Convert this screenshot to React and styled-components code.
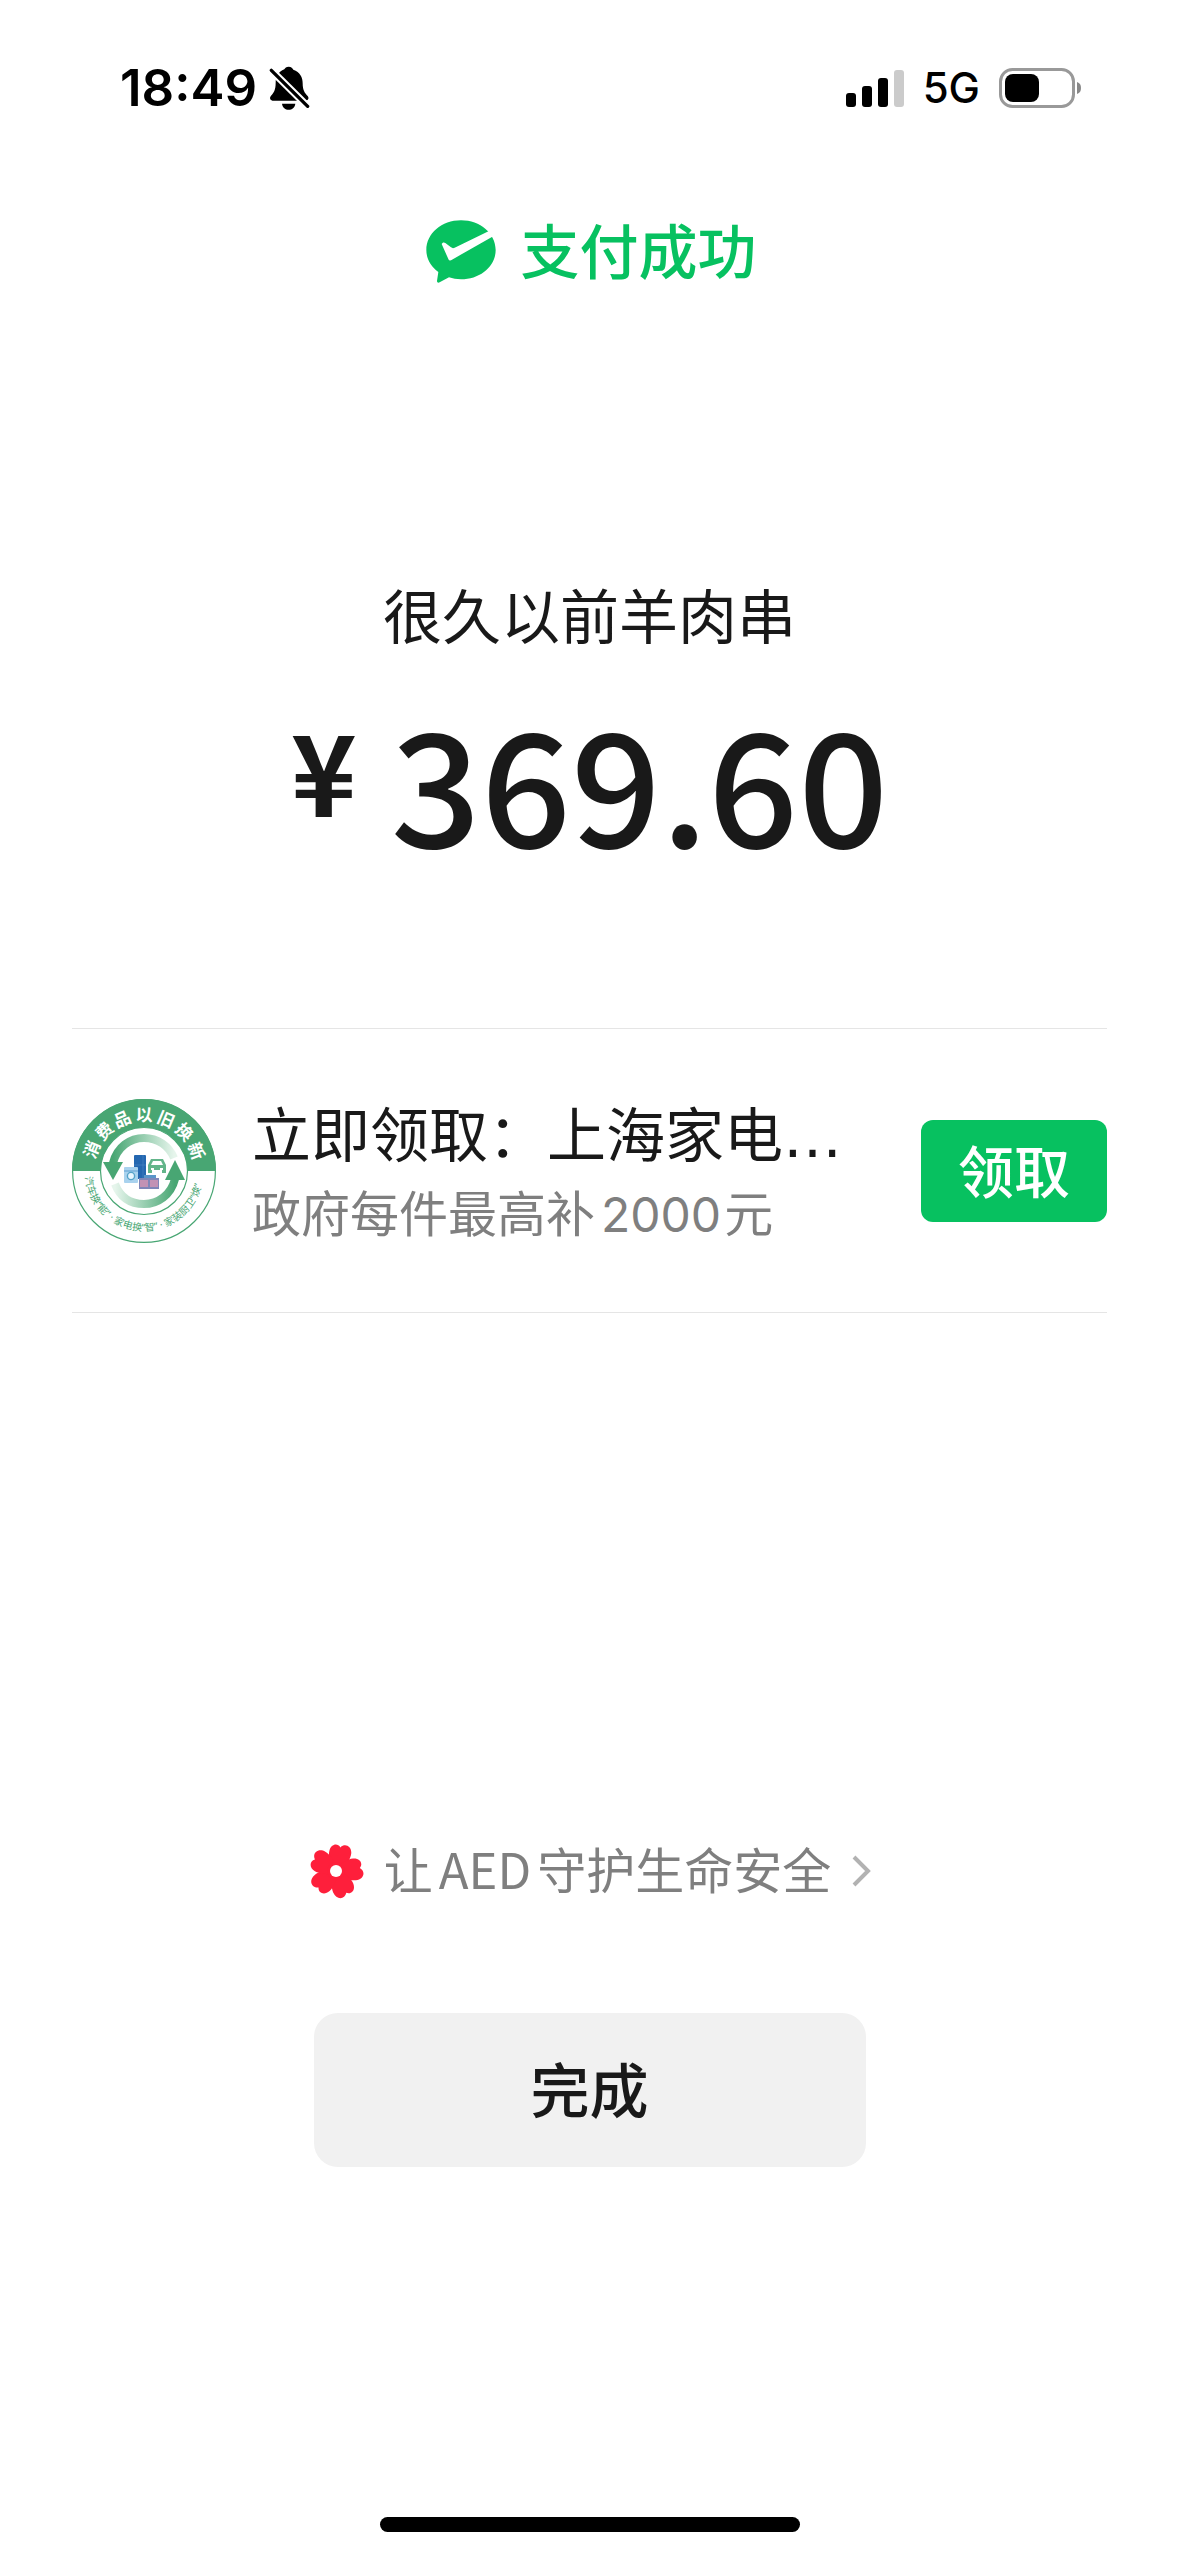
import React from "react";
import styled, { createGlobalStyle } from "styled-components";

const cjk = `"Noto Sans CJK SC", "Noto Sans", sans-serif`;
const latin = `Inter, "Liberation Sans", "Noto Sans CJK SC", sans-serif`;

const color = {
  brand: "#07c160",
  ink: "#191919",
  muted: "#7f7f7f",
  line: "#e5e5e5",
  fill: "#f1f1f1",
  seal: "#48a673",
};

const GlobalStyle = createGlobalStyle`
  * { box-sizing: border-box; }
  body { margin: 0; background: #fff; color: ${color.ink}; font-family: ${cjk}; }
  button { border: 0; padding: 0 0 4px; font-family: inherit; cursor: pointer; }
  svg { display: block; flex: none; }
`;

const Page = styled.div`
  display: flex;
  flex-direction: column;
  min-height: 100vh;
`;

const StatusBar = styled.header`
  display: flex;
  align-items: center;
  justify-content: space-between;
  height: 176px;
  padding: 0 96px 0 120px;
  color: #000;
  font-family: ${latin};
`;

const StatusGroup = styled.div`
  display: flex;
  align-items: center;
  gap: ${(p) => p.$gap}px;
`;

const Clock = styled.time`
  font-size: 51px;
  font-weight: 600;
  line-height: 60px;
`;

const Network = styled.span`
  font-size: 42px;
  font-weight: 500;
  line-height: 60px;
`;

const Main = styled.main`
  flex: 1;
  display: flex;
  flex-direction: column;
  align-items: center;
  padding: 33px 72px 350px;
`;

const Result = styled.h1`
  display: flex;
  align-items: center;
  gap: 24px;
  margin: 0;
  padding-left: 4px;
  color: ${color.brand};
  font-size: 59px;
  font-weight: 500;
  line-height: 80px;

  svg { margin-top: 4px; }
`;

const Merchant = styled.p`
  margin: 285px 0 0;
  font-size: 59px;
  line-height: 80px;
`;

const Amount = styled.p`
  display: flex;
  align-items: flex-start;
  gap: 34px;
  margin: 38px 0 160px;
  font-weight: 500;
`;

const Currency = styled.span`
  font-size: 112px;
  font-weight: 700;
  line-height: 152px;
`;

const Figure = styled.span`
  font-size: 158px;
  line-height: 176px;
`;

const Offer = styled.section`
  display: flex;
  align-items: center;
  align-self: stretch;
  height: 285px;
  border-top: 1px solid ${color.line};
  border-bottom: 1px solid ${color.line};
`;

const OfferText = styled.div`
  flex: 1;
  min-width: 0;
  padding: 4px 36px 0;
  white-space: nowrap;
`;

const OfferTitle = styled.h2`
  margin: 0;
  font-size: 59px;
  font-weight: 400;
  line-height: 76px;
`;

const Dots = styled.span`
  font-family: "DejaVu Sans", sans-serif;
`;

const OfferNote = styled.p`
  margin: 0;
  color: ${color.muted};
  font-size: 49px;
  line-height: 72px;
`;

const Digits = styled.span`
  margin: 0 3px 0 6px;
  font-family: ${latin};
  font-size: 48px;
`;

const ClaimButton = styled.button`
  width: 186px;
  height: 102px;
  border-radius: 12px;
  background: ${color.brand};
  color: #fff;
  font-size: 56px;
  font-weight: 500;
  line-height: 80px;
`;

const Charity = styled.a`
  display: flex;
  align-items: center;
  gap: 20px;
  margin-top: auto;
  padding-left: 2px;
  color: ${color.muted};
  font-size: 49px;
  line-height: 76px;
  text-decoration: none;

  svg { margin-top: 5px; }
`;

const Latin = styled.span`
  margin: 0 6px;
`;

const DoneButton = styled.button`
  width: 552px;
  height: 154px;
  margin-top: 107px;
  border-radius: 24px;
  background: ${color.fill};
  color: ${color.ink};
  font-size: 59px;
  font-weight: 500;
  line-height: 80px;
`;

const HomeIndicator = styled.div`
  align-self: center;
  width: 420px;
  height: 15px;
  margin-bottom: 24px;
  border-radius: 8px;
  background: #000;
`;

function MutedBell() {
  return (
    <svg width="41" height="44" viewBox="504 48 123 132" aria-hidden="true">
      <path d="M563 50c8 0 12 5 14 9 20 7 28 23 28 41 0 22 7 30 15 38 6 8 0 14-8 14h-94c-10 0-14-8-8-15 8-9 14-17 14-39 0-18 8-33 26-40 2-4 6-8 13-8Z" />
      <path d="M543 161h40c-2 12-10 18-20 18s-18-6-20-18Z" />
      <path d="M500 50 632 181" stroke="#fff" strokeWidth="22" />
      <path d="m511 61 109 108" stroke="#000" strokeWidth="10" strokeLinecap="round" />
    </svg>
  );
}

function Signal() {
  return (
    <svg width="58" height="38" viewBox="0 0 58 38" aria-hidden="true">
      <rect x="0" y="24" width="10" height="14" rx="3" />
      <rect x="16" y="17" width="10" height="21" rx="3" />
      <rect x="32" y="9" width="10" height="29" rx="3" />
      <rect x="48" y="1" width="10" height="37" rx="3" fill="#cbcbcb" />
    </svg>
  );
}

function Battery() {
  return (
    <svg width="84" height="40" viewBox="0 0 84 40" aria-hidden="true">
      <rect x="1.5" y="1.5" width="73" height="37" rx="12" fill="none" stroke="#999" strokeWidth="3" />
      <rect x="6" y="6" width="34" height="28" rx="8" />
      <path d="M78 14c3 1 4 3 4 6s-1 5-4 6Z" fill="#888" />
    </svg>
  );
}

function PaidIcon() {
  return (
    <svg width="70" height="63" viewBox="47 59 210 189" aria-hidden="true">
      <path
        fill={color.brand}
        d="M152 60C94 60 48 100 48 149c0 27 14 50 36 66l-4 27c0 5 4 6 8 4l28-15c11 4 23 6 36 6 58 0 104-39 104-88 0-49-46-89-104-89Z"
      />
      <path
        fill="#fff"
        d="M94 131c2-5 7-6 11-3l17 13c4 3 7 3 11 1L236 92l14 15-125 71c-5 4-9 3-11-2L94 131Z"
      />
    </svg>
  );
}

function Flower() {
  return (
    <svg width="54" height="56" viewBox="-26 -28 54 56" aria-hidden="true">
      {[13, 85, 157, 229, 301].map((a) => (
        <path
          key={a}
          transform={`rotate(${a})`}
          fill="#fe1f3b"
          d="M-5 0C-7-8-11-12-11-18-11-25-5-28-1-24 3-30 11-27 11-19 11-13 8-8 5 0Z"
        />
      ))}
      <circle r="9" fill="#fe1f3b" />
      <circle r="6" fill="#fff" />
    </svg>
  );
}

function Chevron() {
  return (
    <svg width="20" height="32" viewBox="0 0 20 32" aria-hidden="true">
      <path d="m3 2 14 14L3 30" fill="none" stroke="#b2b2b2" strokeWidth="4" />
    </svg>
  );
}

function TradeInSeal() {
  return (
    <svg width="144" height="144" viewBox="-72 -72 144 144" aria-hidden="true">
      <defs>
        <path id="seal-top" d="M-50 0A50 50 0 0 1 50 0" />
        <path id="seal-bottom" d="M-59 1A59 59 0 0 0 59 1" />
        <linearGradient id="fade-right">
          <stop offset="0" stopColor="#48a673" />
          <stop offset="1" stopColor="#e6f5ec" />
        </linearGradient>
        <linearGradient id="fade-left">
          <stop offset="0" stopColor="#e6f5ec" />
          <stop offset="1" stopColor="#48a673" />
        </linearGradient>
      </defs>
      <circle r="71.4" fill="#fff" stroke={color.seal} strokeWidth="1.2" />
      <path d="M-72 0A72 72 0 0 1 72 0Z" fill={color.seal} />
      <circle r="43.5" fill="#fff" stroke={color.seal} strokeWidth="1.2" />
      <text fontSize="17" fontWeight="700" fill="#fff" x="11 31 50 70 90 110 130">
        <textPath href="#seal-top">消费品以旧换新</textPath>
      </text>
      <text fontFamily="'Noto Sans', 'Noto Sans CJK SC', sans-serif" fontSize="10" fill={color.seal}>
        <textPath href="#seal-bottom" startOffset="5">
          汽车换“能” · 家电换“智” · 家装厨卫“焕”
        </textPath>
      </text>
      <path d="M-31-8C-27-24-14-33 0-33S25-25 30-13" fill="none" stroke="url(#fade-right)" strokeWidth="8" />
      <path d="M31 8C27 24 14 33 0 33S-24 26-29 13" fill="none" stroke="url(#fade-left)" strokeWidth="8" />
      <path d="M-41-9h20L-31 9Z" fill={color.seal} />
      <path d="M21 9h20L31-11Z" fill={color.seal} />
      <rect x="-10" y="-16" width="12" height="24" rx="1" fill="#2467b0" />
      <path d="M-10-6H2M-1-16V8" stroke="#4a88c8" strokeWidth="0.6" />
      <rect x="-20" y="-4" width="14" height="16" rx="1" fill="#a9d2ee" />
      <path d="M-20 0h14" stroke="#5f9fd0" strokeWidth="1" />
      <circle cx="-13" cy="5" r="3.6" fill="#e8f6ff" stroke="#55a3c9" strokeWidth="1.4" />
      <path d="M7-12h12l3 6v8h-4v-3H8v3H4v-8Z" fill="#63b58a" />
      <path d="M9-10h8l2 4H7ZM7-3h3v2H7ZM16-3h3v2h-3Z" fill="#fff" />
      <rect x="0" y="4" width="12" height="3" fill="#5a95c9" />
      <rect x="-5" y="7" width="20" height="11" fill="#7f86b8" />
      <path d="M-4 9h8v7h-8ZM6 9h8v7H6Z" fill="#c292b4" />
    </svg>
  );
}

export default function App() {
  return (
    <Page>
      <GlobalStyle />
      <StatusBar>
        <StatusGroup $gap={12}>
          <Clock>18:49</Clock>
          <MutedBell />
        </StatusGroup>
        <StatusGroup $gap={19}>
          <Signal />
          <Network>5G</Network>
          <Battery />
        </StatusGroup>
      </StatusBar>

      <Main>
        <Result>
          <PaidIcon />
          支付成功
        </Result>
        <Merchant>很久以前羊肉串</Merchant>
        <Amount>
          <Currency>¥</Currency>
          <Figure>369.60</Figure>
        </Amount>

        <Offer>
          <TradeInSeal />
          <OfferText>
            <OfferTitle>
              立即领取：上海家电<Dots>…</Dots>
            </OfferTitle>
            <OfferNote>
              政府每件最高补<Digits>2000</Digits>元
            </OfferNote>
          </OfferText>
          <ClaimButton type="button">领取</ClaimButton>
        </Offer>

        <Charity href="#aed">
          <Flower />
          <span>
            让<Latin>AED</Latin>守护生命安全
          </span>
          <Chevron />
        </Charity>
        <DoneButton type="button">完成</DoneButton>
      </Main>

      <HomeIndicator />
    </Page>
  );
}
